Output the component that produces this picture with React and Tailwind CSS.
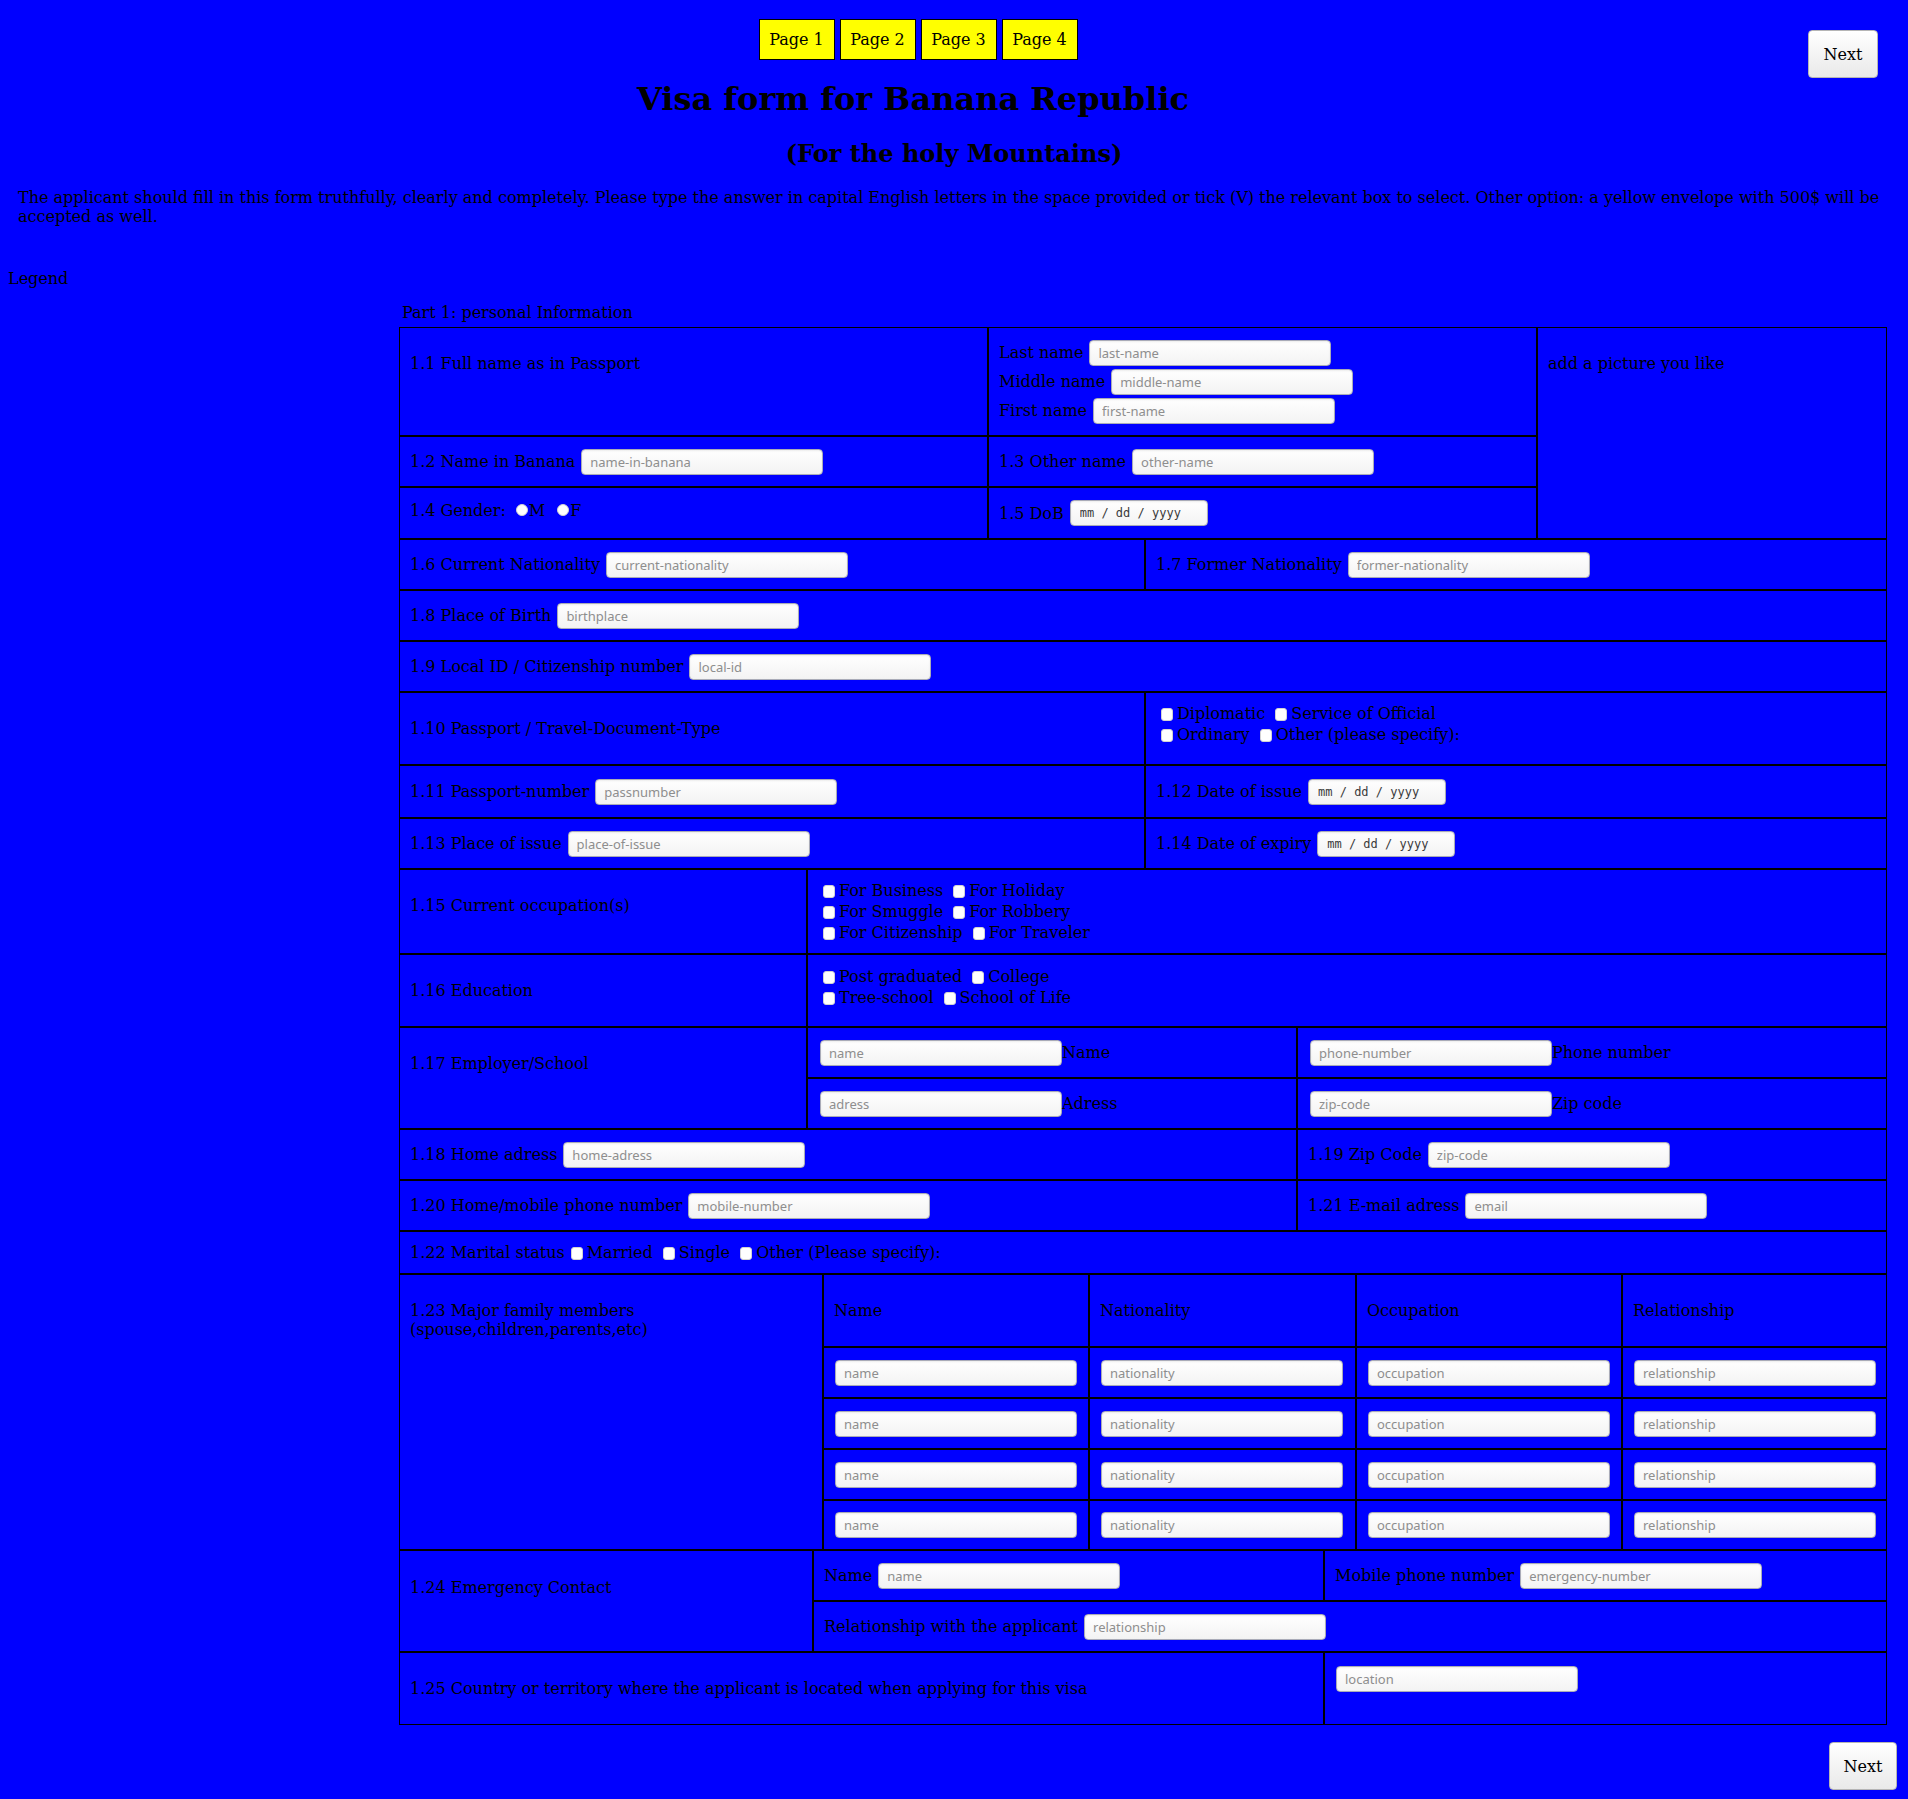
import React from 'react';

function Field({ placeholder, className = '' }) {
  return (
    <input
      type="text"
      placeholder={placeholder}
      className={`h-[26px] w-[242px] shrink-0 rounded-[4px] border border-[#a9abb8] bg-linear-to-b from-white to-[#f3f3f3] pl-[8px] font-['Noto_Sans',sans-serif] text-[13px] text-black shadow-[inset_0_1px_2px_rgba(0,0,0,0.08)] outline-none placeholder:text-[#8e8e8e] ${className}`}
    />
  );
}

function DateField() {
  return (
    <input
      type="text"
      readOnly
      value="mm / dd / yyyy"
      className="h-[26px] w-[138px] shrink-0 rounded-[4px] border border-[#a9abb8] bg-linear-to-b from-white to-[#f3f3f3] pl-[9px] font-['DejaVu_Sans_Mono',monospace] text-[12px] text-[#3a3a3a] shadow-[inset_0_1px_2px_rgba(0,0,0,0.08)] outline-none"
    />
  );
}

function Check({ className = 'ml-[5px]' }) {
  return (
    <input
      type="checkbox"
      className={`mr-[4px] inline-block h-[13px] w-[12px] appearance-none rounded-[3px] border border-[#d2d2d2] bg-white align-[-2px] ${className}`}
    />
  );
}

function Radio({ className = '' }) {
  return (
    <input
      type="radio"
      className={`mr-[1px] h-[12px] w-[12px] shrink-0 appearance-none rounded-full border border-[#d2d2d2] bg-white ${className}`}
    />
  );
}

function Cell({ className = '', children }) {
  return <div className={`border border-black px-[10px] ${className}`}>{children}</div>;
}

function Labeled({ label, placeholder, date, className = '' }) {
  return (
    <Cell className={`flex items-center gap-[6px] ${className}`}>
      <span className="whitespace-nowrap">{label}</span>
      {date ? <DateField /> : <Field placeholder={placeholder} />}
    </Cell>
  );
}

function NextButton({ className = 'w-[70px]' }) {
  return (
    <button
      className={`h-[48px] rounded-[4px] border border-[#b5b5b5] bg-linear-to-b from-white to-[#e9e9e9] font-['DejaVu_Serif',serif] text-[16px] text-black ${className}`}
    >
      Next
    </button>
  );
}

export default function App() {
  const pages = ['Page 1', 'Page 2', 'Page 3', 'Page 4'];
  const family = [0, 1, 2, 3];

  return (
    <div className="min-h-[1799px] bg-[#0000ff] font-['DejaVu_Serif',serif] text-[16px] leading-[19px] text-black">
      <div className="flex">
        <div className="flex flex-1 flex-col items-center pl-[28px] pt-[19px]">
          <nav className="flex gap-[5px]">
            {pages.map((p) => (
              <a
                key={p}
                className="flex h-[41px] w-[76px] items-center justify-center border border-black bg-[#ffff00]"
              >
                {p}
              </a>
            ))}
          </nav>
          <h1 className="mr-[10px] mt-[21px] text-[32px] font-bold leading-[37px]">Visa form for Banana Republic</h1>
        </div>
        <div className="w-[100px] pt-[30px]">
          <NextButton />
        </div>
      </div>

      <h2 className="mt-[22px] text-center text-[24px] font-bold leading-[28px]">(For the holy Mountains)</h2>

      <p className="ml-[18px] mr-[18px] mt-[20px]">
        The applicant should fill in this form truthfully, clearly and completely. Please type the answer in capital
        English letters in the space provided or tick (V) the relevant box to select. Other option: a yellow envelope
        with 500$ will be accepted as well.
      </p>

      <div className="mt-[43px] pl-[8px]">Legend</div>

      <div className="ml-[399px] w-[1488px]">
        <div className="mt-[15px] pl-[3px]">Part 1: personal Information</div>

        <div className="mt-[5px]">
          {/* 1.1 - 1.5 */}
          <div className="grid grid-cols-[589px_549px_350px] grid-rows-[109px_51px_52px]">
            <Cell className="pt-[26px]">1.1 Full name as in Passport</Cell>
            <Cell className="flex flex-col py-[10px]">
              {[
                ['Last name', 'last-name'],
                ['Middle name', 'middle-name'],
                ['First name', 'first-name'],
              ].map(([l, p]) => (
                <div key={l} className="flex h-[29px] items-center gap-[6px]">
                  <span className="whitespace-nowrap">{l}</span>
                  <Field placeholder={p} />
                </div>
              ))}
            </Cell>
            <Cell className="row-span-3 pt-[26px]">add a picture you like</Cell>
            <Labeled label="1.2 Name in Banana" placeholder="name-in-banana" />
            <Labeled label="1.3 Other name" placeholder="other-name" />
            <Cell className="flex items-center pb-[6px]">
              <span>1.4 Gender:</span>
              <Radio className="ml-[10px]" />
              <span>M</span>
              <Radio className="ml-[12px]" />
              <span>F</span>
            </Cell>
            <Labeled label="1.5 DoB" date />
          </div>

          {/* 1.6 - 1.14 */}
          <div className="grid grid-cols-[746px_742px] grid-rows-[51px_51px_51px_73px_53px_51px]">
            <Labeled label="1.6 Current Nationality" placeholder="current-nationality" />
            <Labeled label="1.7 Former Nationality" placeholder="former-nationality" />
            <Labeled className="col-span-2" label="1.8 Place of Birth" placeholder="birthplace" />
            <Labeled className="col-span-2" label="1.9 Local ID / Citizenship number" placeholder="local-id" />
            <Cell className="flex items-center">1.10 Passport / Travel-Document-Type</Cell>
            <Cell className="pt-[10px] leading-[21px]">
              <Check />Diplomatic <Check />Service of Official
              <br />
              <Check />Ordinary <Check />Other (please specify):
            </Cell>
            <Labeled label="1.11 Passport-number" placeholder="passnumber" />
            <Labeled label="1.12 Date of issue" date />
            <Labeled label="1.13 Place of issue" placeholder="place-of-issue" />
            <Labeled label="1.14 Date of expiry" date />
          </div>

          {/* 1.15 - 1.21 */}
          <div className="grid grid-cols-[408px_490px_590px] grid-rows-[85px_73px_51px_51px_51px_51px]">
            <Cell className="pt-[26px]">1.15 Current occupation(s)</Cell>
            <Cell className="col-span-2 pt-[10px] leading-[21px]">
              <Check />For Business <Check />For Holiday
              <br />
              <Check />For Smuggle <Check />For Robbery
              <br />
              <Check />For Citizenship <Check />For Traveler
            </Cell>
            <Cell className="flex items-center">1.16 Education</Cell>
            <Cell className="col-span-2 pt-[11px] leading-[21px]">
              <Check />Post graduated <Check />College
              <br />
              <Check />Tree-school <Check />School of Life
            </Cell>
            <Cell className="row-span-2 pt-[26px]">1.17 Employer/School</Cell>
            <Cell className="flex items-center pl-[12px]">
              <Field placeholder="name" />
              <span>Name</span>
            </Cell>
            <Cell className="flex items-center pl-[12px]">
              <Field placeholder="phone-number" />
              <span>Phone number</span>
            </Cell>
            <Cell className="flex items-center pl-[12px]">
              <Field placeholder="adress" />
              <span>Adress</span>
            </Cell>
            <Cell className="flex items-center pl-[12px]">
              <Field placeholder="zip-code" />
              <span>Zip code</span>
            </Cell>
            <Labeled className="col-span-2" label="1.18 Home adress" placeholder="home-adress" />
            <Labeled label="1.19 Zip Code" placeholder="zip-code" />
            <Labeled className="col-span-2" label="1.20 Home/mobile phone number" placeholder="mobile-number" />
            <Labeled label="1.21 E-mail adress" placeholder="email" />
          </div>

          {/* 1.22 */}
          <div className="grid h-[43px] grid-cols-1">
            <Cell className="flex items-center">
              <span>
                1.22 Marital status
                <Check className="ml-[6px]" />Married <Check />Single <Check />Other (Please specify):
              </span>
            </Cell>
          </div>

          {/* 1.23 */}
          <div className="grid grid-cols-[424px_266px_267px_266px_265px] grid-rows-[73px_51px_51px_51px_50px]">
            <Cell className="row-span-5 pt-[26px]">
              1.23 Major family members
              <br />
              (spouse,children,parents,etc)
            </Cell>
            <Cell className="flex items-center">Name</Cell>
            <Cell className="flex items-center">Nationality</Cell>
            <Cell className="flex items-center">Occupation</Cell>
            <Cell className="flex items-center">Relationship</Cell>
            {family.map((i) => (
              <React.Fragment key={i}>
                <Cell className="flex items-center pl-[11px]">
                  <Field placeholder="name" />
                </Cell>
                <Cell className="flex items-center pl-[11px]">
                  <Field placeholder="nationality" />
                </Cell>
                <Cell className="flex items-center pl-[11px]">
                  <Field placeholder="occupation" />
                </Cell>
                <Cell className="flex items-center pl-[11px]">
                  <Field placeholder="relationship" />
                </Cell>
              </React.Fragment>
            ))}
          </div>

          {/* 1.24 */}
          <div className="grid grid-cols-[414px_511px_563px] grid-rows-[51px_51px]">
            <Cell className="row-span-2 pt-[27px]">1.24 Emergency Contact</Cell>
            <Labeled label="Name" placeholder="name" />
            <Labeled label="Mobile phone number" placeholder="emergency-number" />
            <Labeled className="col-span-2" label="Relationship with the applicant" placeholder="relationship" />
          </div>

          {/* 1.25 */}
          <div className="grid h-[73px] grid-cols-[925px_563px]">
            <Cell className="flex items-center">
              1.25 Country or territory where the applicant is located when applying for this visa
            </Cell>
            <Cell className="pl-[11px] pt-[13px]">
              <Field placeholder="location" />
            </Cell>
          </div>
        </div>
      </div>

      <div className="mt-[17px] flex justify-end pb-[10px] pr-[11px]">
        <NextButton className="w-[68px]" />
      </div>
    </div>
  );
}
